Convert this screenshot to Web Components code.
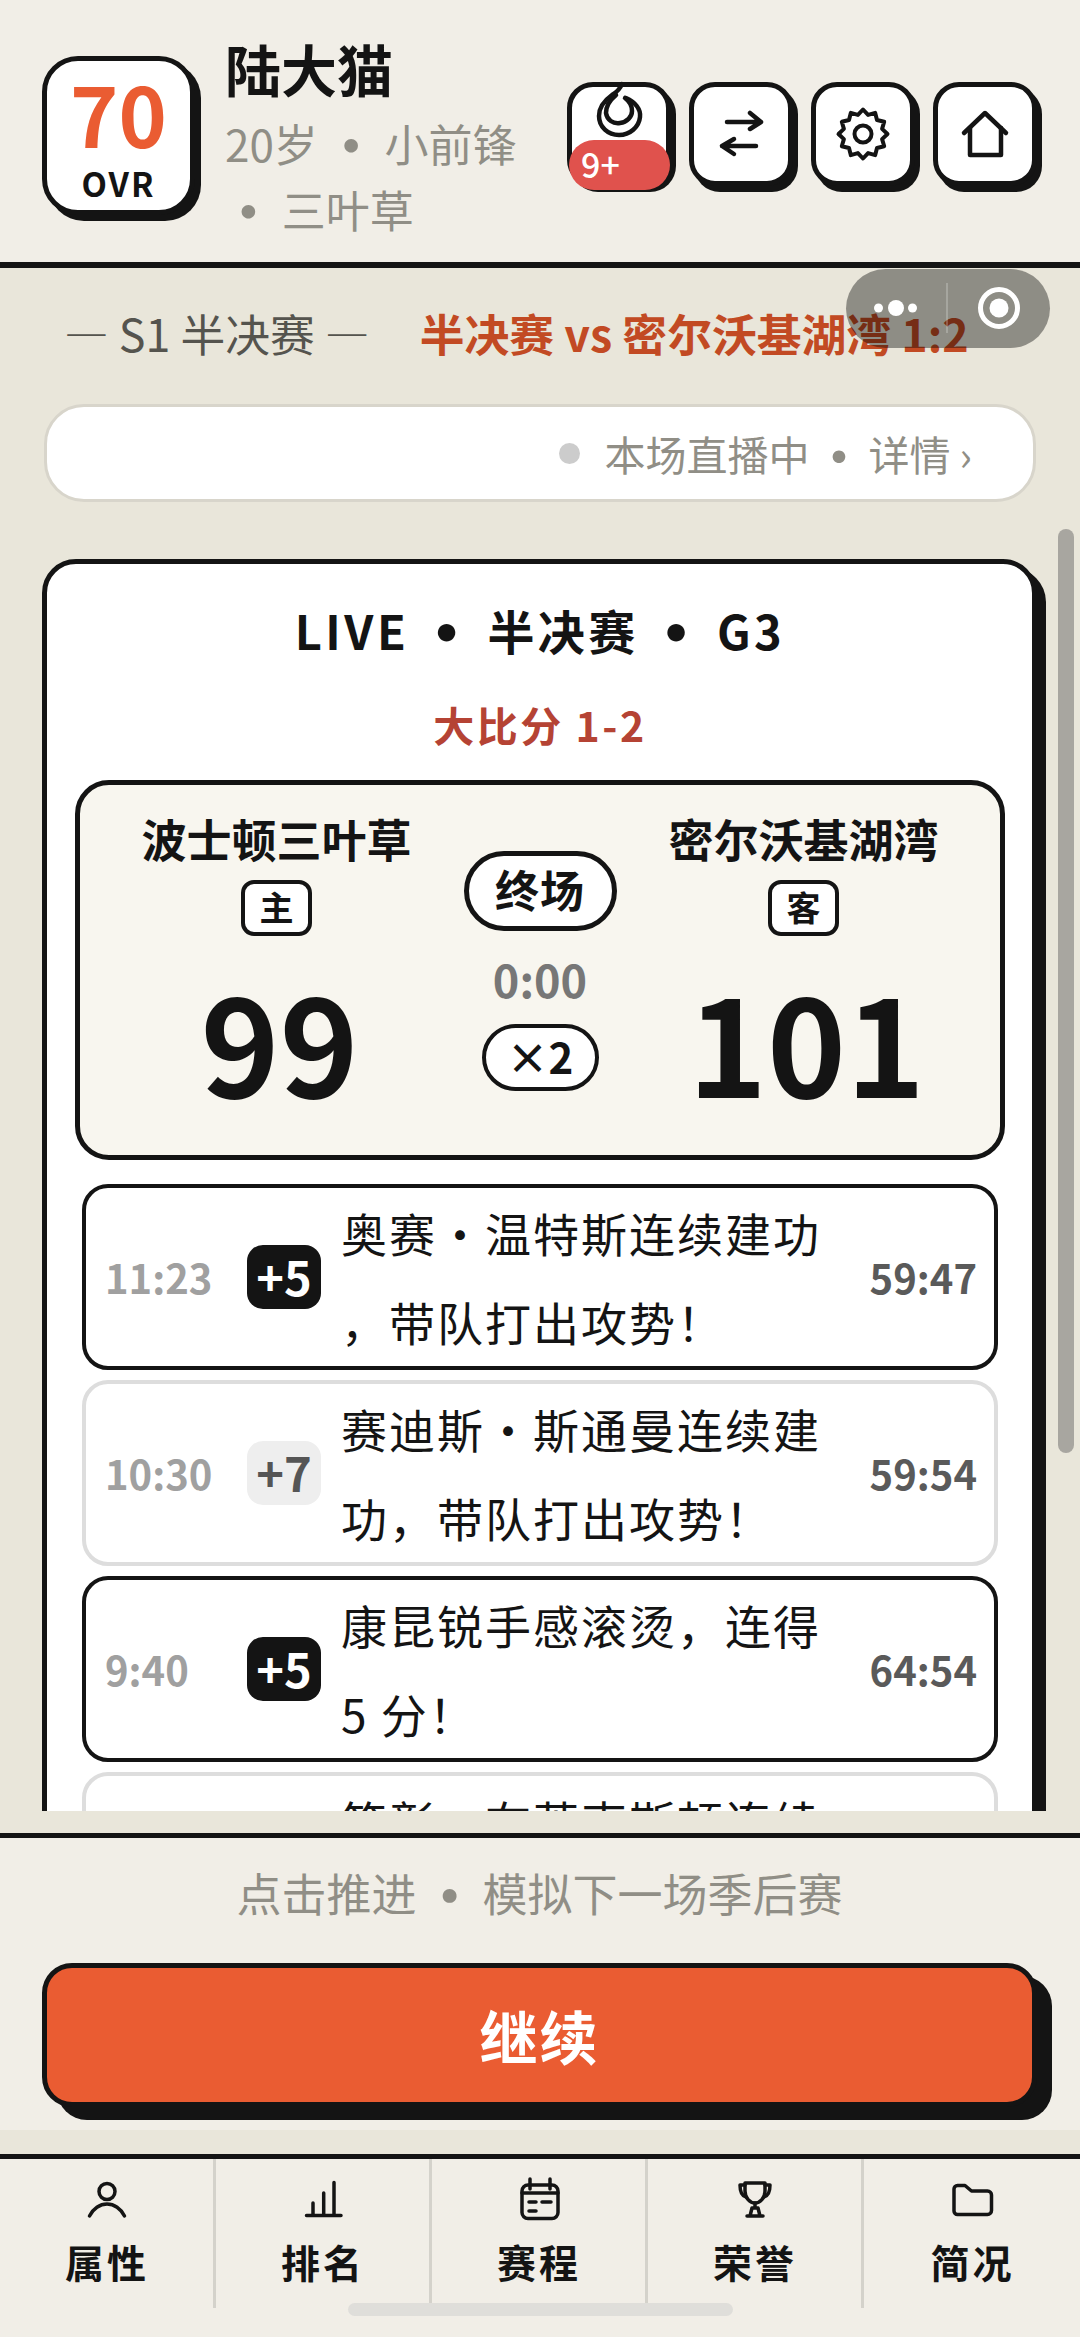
<!DOCTYPE html>
<html lang="zh-CN">
<head>
<meta charset="utf-8">
<title>陆大猫</title>
<style>
html,body{margin:0;padding:0;background:#f1eee7}
body{width:1080px;height:2337px;overflow:hidden;font-family:"Noto Sans CJK SC","Noto Sans",sans-serif;color:#141414}
</style>
</head>
<body>
<game-app>
  <game-header slot="header">
    <ovr-badge slot="badge" value="70"></ovr-badge>
    <span slot="name">陆大猫</span>
    <span slot="meta">20岁 <dot-sep></dot-sep> 小前锋 <dot-sep></dot-sep> 三叶草</span>
    <icon-button slot="actions" badge="9+">
      <svg style="align-self:flex-start;margin-top:-7px" width="60" height="60" viewBox="0 0 60 60" fill="none" stroke="#141414" stroke-width="4.5" stroke-linecap="round" stroke-linejoin="round"><path d="M37 18C46 22 52 29 51 37C50 47 41 55 30 55C19 55 10 47 10 36C10 27 16 20 23 15C28 12 31 9 33 4"/><path d="M27 15C21 20 17 27 17 33C18 40 24 44 31 43C38 42 43 37 43 31C43 25 40 21 36 18"/></svg>
    </icon-button>
    <icon-button slot="actions">
      <svg width="60" height="60" viewBox="0 0 60 60" fill="none" stroke="#141414" stroke-width="4.5" stroke-linecap="round" stroke-linejoin="round"><path d="M16 18H50M39 9L50 18L39 25"/><path d="M45 42H11M23 35L11 42L23 50"/></svg>
    </icon-button>
    <icon-button slot="actions">
      <svg width="60" height="60" viewBox="0 0 60 60" fill="none" stroke="#141414" stroke-width="4" stroke-linejoin="round"><polygon points="30,5.5 35.1,10.9 42.2,8.9 44,16 51.2,17.8 49.1,24.9 54.5,30 49.1,35.1 51.2,42.2 44,44 42.2,51.1 35.1,49.1 30,54.5 24.9,49.1 17.8,51.1 16,44 8.8,42.2 10.9,35.1 5.5,30 10.9,24.9 8.8,17.8 16,16 17.8,8.9 24.9,10.9"/><circle cx="30" cy="30" r="8.5"/></svg>
    </icon-button>
    <icon-button slot="actions">
      <svg width="60" height="60" viewBox="0 0 60 60" fill="none" stroke="#141414" stroke-width="4.5" stroke-linecap="round" stroke-linejoin="round"><path d="M9 29L30 9L51 29"/><path d="M15 24V51H46V24"/></svg>
    </icon-button>
  </game-header>

  <season-bar slot="main" label="— S1 半决赛 —" result="半决赛 vs 密尔沃基湖湾 1:2"></season-bar>
  <status-pill slot="main"><span>本场直播中</span><dot-sep style="--w:59px"></dot-sep><span>详情 ›</span></status-pill>
  <live-scroller slot="main">
    <live-card>
      <span slot="title">LIVE<dot-sep style="--w:78px"></dot-sep>半决赛<dot-sep style="--w:78px"></dot-sep>G3</span>
      <span slot="series">大比分 1-2</span>
      <score-panel slot="panel">
        <team-col slot="home" name="波士顿三叶草" side="主" score="99"></team-col>
        <game-clock slot="mid" state="终场" time="0:00" speed="×2"></game-clock>
        <team-col slot="away" name="密尔沃基湖湾" side="客" score="101"></team-col>
      </score-panel>
      <event-row slot="events" strong time="11:23" pts="+5" score="59:47">奥赛·温特斯连续建功<br>，带队打出攻势！</event-row>
      <event-row slot="events" time="10:30" pts="+7" score="59:54">赛迪斯·斯通曼连续建<br>功，带队打出攻势！</event-row>
      <event-row slot="events" strong time="9:40" pts="+5" score="64:54">康昆锐手感滚烫，连得<br>5 分！</event-row>
      <event-row slot="events">笃彰·布莱克斯顿连续</event-row>
    </live-card>
  </live-scroller>

  <action-footer slot="footer">
    <span slot="hint">点击推进<dot-sep style="--w:66px"></dot-sep>模拟下一场季后赛</span>
    <span slot="cta">继续</span>
  </action-footer>

  <tab-bar slot="tabs">
    <tab-item label="属性"><svg width="48" height="48" viewBox="0 0 48 48" fill="none" stroke="#141414" stroke-width="3.5" stroke-linecap="round" stroke-linejoin="round"><circle cx="24" cy="16.5" r="8"/><path d="M6.5 41C10 33.500 17 29 24 29C31 29 38 33.500 41.500 41"/></svg></tab-item>
    <tab-item label="排名"><svg width="48" height="48" viewBox="0 0 48 48" fill="none" stroke="#141414" stroke-width="3.500" stroke-linecap="round"><path d="M7.500 40.500H42M14 40V28M24.700 40V18M35 40V7.500"/></svg></tab-item>
    <tab-item label="赛程"><svg width="48" height="48" viewBox="0 0 48 48" fill="none" stroke="#141414" stroke-width="3.500" stroke-linecap="round" stroke-linejoin="round"><rect x="7" y="10" width="36" height="33.500" rx="6"/><path d="M15 4V14M35 4V14M7 18H43M14 27H21M27 27H36M14 36H21"/></svg></tab-item>
    <tab-item label="荣誉"><svg width="48" height="48" viewBox="0 0 48 48" fill="none" stroke="#141414" stroke-width="3.500" stroke-linecap="round" stroke-linejoin="round"><path d="M14 8H34V16C34 23 29 28 24 28C19 28 14 23 14 16Z"/><path d="M14 10H9C9 17 11 21 15 22M34 10H39C39 17 37 21 33 22M24 28V33M19 41L21 33H27L29 41ZM16 41H32"/></svg></tab-item>
    <tab-item label="简况"><svg width="48" height="48" viewBox="0 0 48 48" fill="none" stroke="#141414" stroke-width="3.500" stroke-linecap="round" stroke-linejoin="round"><path d="M6 14A3.500 3.500 0 0 1 9.500 10.500H17L23.500 16H39.500A4 4 0 0 1 43.500 20V35.500A4 4 0 0 1 39.500 39.500H9.500A3.500 3.500 0 0 1 6 36Z"/></svg></tab-item>
  </tab-bar>
</game-app>

<script>
function el(name, css, html){
  customElements.define(name, class extends HTMLElement{
    constructor(){
      super();
      const root=this.attachShadow({mode:'open'});
      const get=k=>this.getAttribute(k)||'';
      root.innerHTML='<style>'+css+'</style>'+(typeof html==='function'?html(get,this):html);
    }
  });
}
const BLACK='#141414';

el('game-app',`
  :host{display:flex;flex-direction:column;width:1080px;height:2337px;position:relative;overflow:hidden;background:#e9e6da}
  main{flex:1;min-height:0;display:flex;flex-direction:column;background:#e9e6da;padding-bottom:22px}
  .band{height:24px;flex:none}
  .bar{position:absolute;left:1058px;top:529px;width:16px;height:924px;border-radius:8px;background:#a8a6a0}
  wechat-capsule{position:absolute;left:846px;top:269px}
`,`<slot name="header"></slot><main><slot name="main"></slot></main><slot name="footer"></slot><div class="band"></div><slot name="tabs"></slot><div class="bar"></div><wechat-capsule></wechat-capsule>`);

el('wechat-capsule',`
  :host{display:block;width:204px;height:79px;border-radius:40px;background:rgba(0,0,0,.39)}
  svg{display:block}
`,`<svg width="204" height="79" viewBox="0 0 204 79"><circle cx="32.500" cy="39" r="4.500" fill="#fff"/><circle cx="50" cy="39" r="8" fill="#fff"/><circle cx="66.500" cy="39" r="4.500" fill="#fff"/><path d="M101 14V64" stroke="#fff" stroke-opacity=".22" stroke-width="2"/><circle cx="153" cy="39" r="18.500" fill="none" stroke="#fff" stroke-width="5"/><circle cx="153" cy="39" r="9.500" fill="#fff"/></svg>`);

el('game-header',`
  :host{display:flex;flex:none;align-items:center;box-sizing:border-box;height:268px;padding:0 43px 0 42px;background:#f1eee7;border-bottom:6px solid ${BLACK}}
  .badge{flex:none;margin-top:8px}
  .info{flex:1;min-width:0;margin:0 34px 0 30px;align-self:flex-start;padding-top:33px}
  .name{font-size:56px;font-weight:700;line-height:70px}
  .meta{font-size:44px;line-height:66px;color:#908e86;margin-top:7px}
  .actions{flex:none;display:flex;gap:18px;margin-top:5px}
`,`<div class="badge"><slot name="badge"></slot></div>
   <div class="info"><div class="name"><slot name="name"></slot></div><div class="meta"><slot name="meta"></slot></div></div>
   <div class="actions"><slot name="actions"></slot></div>`);

el('ovr-badge',`
  :host{display:flex;flex-direction:column;align-items:center;box-sizing:border-box;width:153px;height:159px;background:#fff;border:5px solid ${BLACK};border-radius:36px;box-shadow:6px 6px 0 ${BLACK}}
  .v{font-size:82px;font-weight:700;color:#ea5c32;line-height:84px;margin-top:10px}
  .l{font-size:33px;font-weight:700;line-height:38px;letter-spacing:2px;margin-top:9px}
`,g=>`<div class="v">${g('value')}</div><div class="l">OVR</div>`);

el('dot-sep',`
  :host{display:inline-block;width:var(--w,47px);text-align:center;color:inherit;line-height:0}
  span{font-size:1.45em;line-height:0;vertical-align:-.13em;margin:0 -.5em}
`,`<span>·</span>`);

el('icon-button',`
  :host{display:flex;align-items:center;justify-content:center;position:relative;box-sizing:border-box;width:104px;height:104px;background:#fff;border:5px solid ${BLACK};border-radius:26px;box-shadow:5px 6px 0 ${BLACK}}
  .b{position:absolute;left:-3px;bottom:-9px;box-sizing:border-box;width:101px;height:50px;padding-left:12px;border-radius:25px;background:#e0524d;color:#fff;font-size:34px;font-weight:500;line-height:48px}
  .b:empty{display:none}
`,g=>`<slot></slot><div class="b">${g('badge')}</div>`);

el('season-bar',`
  :host{display:flex;align-items:center;gap:50px;box-sizing:border-box;height:128px;padding-left:64px;font-size:44.800px;white-space:nowrap;flex:none}
  .a{color:#55544e}
  .b{color:#c24a23;font-weight:700}
`,g=>`<span class="a">${g('label')}</span><span class="b">${g('result')}</span>`);

el('status-pill',`
  :host{display:flex;align-items:center;justify-content:flex-end;flex:none;box-sizing:border-box;height:98px;margin:8px 44px 0 44px;padding-right:61px;background:#fff;border:3px solid #d8d5cb;border-radius:40px;font-size:41px;color:#908e86;white-space:nowrap}
  .dot{width:21px;height:21px;border-radius:50%;background:#cccccc;margin-right:24px}
`,`<div class="dot"></div><slot></slot>`);

el('live-scroller',`
  :host{display:block;flex:1;min-height:0;overflow:hidden;padding:57px 43px 0 42px;box-sizing:border-box}
`,`<slot></slot>`);

el('live-card',`
  :host{display:block;box-sizing:border-box;background:#fff;border:5px solid ${BLACK};border-radius:34px;box-shadow:9px 9px 0 ${BLACK};padding:36px 27px 40px 28px}
  .t{font-size:47px;font-weight:700;line-height:60px;letter-spacing:3.500px;text-align:center}
  .s{font-size:41px;font-weight:700;line-height:56px;letter-spacing:2.500px;color:#b54334;text-align:center;margin-top:36px}
  .p{margin-top:28px}
  .e{display:flex;flex-direction:column;gap:10px;margin:24px 7px 0 7px}
`,`<div class="t"><slot name="title"></slot></div><div class="s"><slot name="series"></slot></div><div class="p"><slot name="panel"></slot></div><div class="e"><slot name="events"></slot></div>`);

el('score-panel',`
  :host{display:grid;grid-template-columns:minmax(0,1fr) 134px minmax(0,1fr);box-sizing:border-box;background:#f8f6ef;border:5px solid ${BLACK};border-radius:34px;height:380px}
`,`<slot name="home"></slot><slot name="mid"></slot><slot name="away"></slot>`);

el('team-col',`
  :host{display:flex;flex-direction:column;align-items:center;padding-top:24px}
  .n{font-size:45px;font-weight:700;line-height:60px;white-space:nowrap}
  .tag{box-sizing:border-box;width:71px;height:56px;margin-top:11px;background:#fff;border:4px solid ${BLACK};border-radius:13px;font-size:34px;font-weight:700;line-height:46px;text-align:center}
  .sc{font-size:134px;font-weight:700;line-height:140px;margin-top:34px;padding-left:6px}
`,g=>`<div class="n">${g('name')}</div><div class="tag">${g('side')}</div><div class="sc">${g('score')}</div>`);

el('game-clock',`
  :host{display:flex;flex-direction:column;align-items:center;padding-top:66px}
  .st{flex:none;box-sizing:border-box;width:153px;height:80px;background:#fff;border:5px solid ${BLACK};border-radius:40px;font-size:44px;font-weight:700;line-height:66px;text-align:center;letter-spacing:1px}
  .tm{flex:none;font-size:45px;font-weight:700;line-height:56px;color:#777;margin-top:20px}
  .sp{flex:none;box-sizing:border-box;width:117px;height:67px;margin-top:17px;background:#fff;border:4px solid ${BLACK};border-radius:34px;font-size:42px;font-weight:700;line-height:56px;text-align:center}
`,g=>`<div class="st">${g('state')}</div><div class="tm">${g('time')}</div><div class="sp">${g('speed')}</div>`);

el('event-row',`
  :host{display:flex;align-items:center;box-sizing:border-box;height:186px;padding:0 17px 0 19px;background:#fff;border:4px solid #dddddd;border-radius:26px}
  :host([strong]){border-color:${BLACK}}
  .t{flex:0 0 142px;font-size:40px;font-weight:700;color:#a0a0a0}
  .b{flex:0 0 74px;height:64px;border-radius:16px;background:#eeeeee;color:#555;font-size:47px;font-weight:700;line-height:62px;text-align:center}
  :host([strong]) .b{background:${BLACK};color:#fff}
  .x{flex:0 0 490px;margin-left:20px;font-size:46px;line-height:89px;letter-spacing:2px;white-space:nowrap}
  .s{flex:1;font-size:40px;font-weight:700;color:#5a5a5a;text-align:right;white-space:nowrap}
  .t:empty,.s:empty,.b:empty{visibility:hidden}
  :host(:not([pts])){align-items:flex-start}
`,g=>`<div class="t">${g('time')}</div><div class="b">${g('pts')}</div><div class="x"><slot></slot></div><div class="s">${g('score')}</div>`);

el('action-footer',`
  :host{display:block;flex:none;box-sizing:border-box;height:297px;background:#f1eee7;border-top:5px solid ${BLACK};padding:22px 43px 0 42px}
  .h{font-size:45px;line-height:66px;color:#908e86;text-align:center}
  .c{box-sizing:border-box;height:144px;margin-top:37px;background:#ea5c32;border:5px solid ${BLACK};border-radius:30px;box-shadow:15px 13px 0 ${BLACK};color:#fff;font-size:58px;font-weight:700;line-height:134px;text-align:center;letter-spacing:2px}
`,`<div class="h"><slot name="hint"></slot></div><div class="c"><slot name="cta"></slot></div>`);

el('tab-bar',`
  :host{display:grid;grid-template-columns:repeat(5,216px);flex:none;box-sizing:border-box;height:183px;background:#f1eee7;border-top:5px solid ${BLACK};align-items:start;position:relative}
  .home{position:absolute;left:348px;top:144px;width:385px;height:13px;border-radius:7px;background:#dfdeda}
`,`<slot></slot><div class="home"></div>`);

el('tab-item',`
  :host{display:flex;flex-direction:column;align-items:center;box-sizing:border-box;height:149px;padding-top:16px;border-right:3px solid #d4d2cb}
  :host(:last-of-type){border-right:0}
  .l{font-size:39px;font-weight:700;line-height:50px;letter-spacing:3px;margin-top:13px;padding-left:1px}
  ::slotted(svg){display:block;flex:none}
`,g=>`<slot></slot><div class="l">${g('label')}</div>`);
</script>
</body>
</html>
